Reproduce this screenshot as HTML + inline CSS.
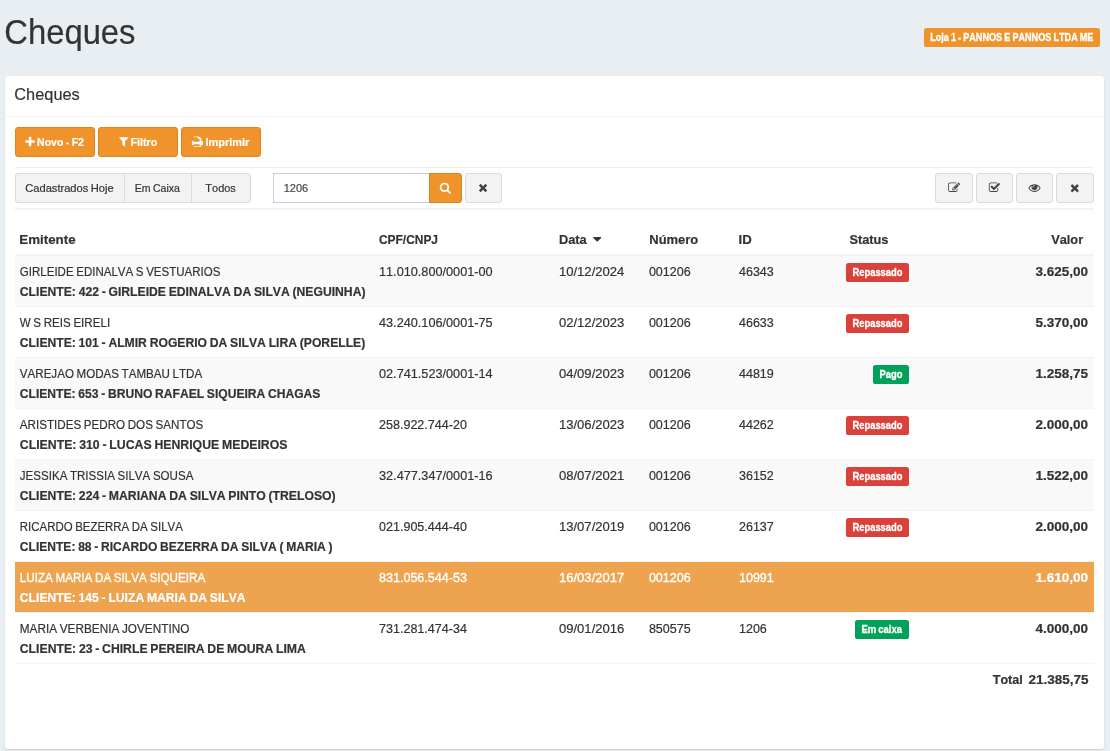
<!DOCTYPE html>
<html lang="pt-br"><head><meta charset="utf-8"><title>Cheques</title>
<style>
html,body{margin:0;padding:0}
body{width:1110px;height:751px;overflow:hidden;background:#e9eef3;position:relative;font-family:"Liberation Sans",sans-serif;color:#333}
.a{position:absolute}
.t{position:absolute;white-space:nowrap;line-height:20px;height:20px;transform-origin:0 0;word-spacing:-0.052em;font-kerning:none}
.ic{position:absolute;overflow:visible}
.r{-webkit-text-stroke:0.2px currentColor}
.s{-webkit-text-stroke:0.3px currentColor}
.b{-webkit-text-stroke:0.2px currentColor}
.w{-webkit-text-stroke:0.35px currentColor}
.card{left:5px;top:76px;width:1099px;height:673px;background:#fff;border-radius:3px;box-shadow:0 0 1px rgba(0,0,0,.09),0 1px 2px rgba(0,0,0,.13)}
.hl{height:1px;background:#f4f4f4}
.hr{left:15px;width:1079px;height:1px;background:#eee}
.bo{background:#f0932a;border:1px solid #dc851f;border-radius:3px;box-sizing:border-box}
.bd{background:#f3f3f3;border:1px solid #dadada;border-radius:3px;box-sizing:border-box}
.lb{border-radius:2.6px}
</style></head><body>
<div id="root" style="position:absolute;left:0;top:0;width:1110px;height:751px;will-change:transform">

<div class="a lb" style="left:924px;top:28px;width:176px;height:19px;background:#f0932a"></div>
<div class="a card"></div>
<div class="a hl" style="left:5px;top:116px;width:1099px"></div>
<div class="a bo" style="left:15px;top:127px;width:80px;height:30px"></div>
<div class="a bo" style="left:98px;top:127px;width:80px;height:30px"></div>
<div class="a bo" style="left:181px;top:127px;width:80px;height:30px"></div>
<div class="a hr" style="top:167px"></div>
<div class="a hr" style="top:208px;height:2px;background:linear-gradient(#f3f3f3,#f1f1f1)"></div>
<div class="a bd" style="left:15px;top:173px;width:236px;height:30px"></div>
<div class="a" style="left:124px;top:174px;width:1px;height:28px;background:#ddd"></div>
<div class="a" style="left:191px;top:174px;width:1px;height:28px;background:#ddd"></div>
<div class="a" style="left:273px;top:173px;width:157px;height:30px;box-sizing:border-box;border:1px solid #c6cfdf;background:#fff"></div>
<div class="a bo" style="left:429px;top:173px;width:33px;height:30px;border-radius:0 3px 3px 0"></div>
<div class="a bd" style="left:465px;top:173px;width:37px;height:30px"></div>
<div class="a bd" style="left:935.0px;top:173px;width:38.0px;height:30px"></div>
<div class="a bd" style="left:976.0px;top:173px;width:37.0px;height:30px"></div>
<div class="a bd" style="left:1016.0px;top:173px;width:37.0px;height:30px"></div>
<div class="a bd" style="left:1056.0px;top:173px;width:38.0px;height:30px"></div>
<div class="a" style="left:15px;top:254px;width:1079px;height:2px;background:#f4f4f4"></div>
<div class="a" style="left:15px;top:256px;width:1079px;height:50px;background:#f9f9f9"></div>
<div class="a" style="left:15px;top:306px;width:1079px;height:1px;background:#f4f4f4"></div>
<div class="a" style="left:15px;top:307px;width:1079px;height:50px;background:#fff"></div>
<div class="a" style="left:15px;top:357px;width:1079px;height:1px;background:#f4f4f4"></div>
<div class="a" style="left:15px;top:358px;width:1079px;height:50px;background:#f9f9f9"></div>
<div class="a" style="left:15px;top:408px;width:1079px;height:1px;background:#f4f4f4"></div>
<div class="a" style="left:15px;top:409px;width:1079px;height:50px;background:#fff"></div>
<div class="a" style="left:15px;top:459px;width:1079px;height:1px;background:#f4f4f4"></div>
<div class="a" style="left:15px;top:460px;width:1079px;height:50px;background:#f9f9f9"></div>
<div class="a" style="left:15px;top:510px;width:1079px;height:1px;background:#f4f4f4"></div>
<div class="a" style="left:15px;top:511px;width:1079px;height:50px;background:#fff"></div>
<div class="a" style="left:15px;top:561px;width:1079px;height:1px;background:#f4f4f4"></div>
<div class="a" style="left:15px;top:562px;width:1079px;height:50px;background:#eea34e"></div>
<div class="a" style="left:15px;top:612px;width:1079px;height:1px;background:#f4f4f4"></div>
<div class="a" style="left:15px;top:613px;width:1079px;height:50px;background:#fff"></div>
<div class="a" style="left:15px;top:663px;width:1079px;height:1px;background:#f4f4f4"></div>
<div class="a lb" style="left:845.9px;top:263px;width:63.2px;height:19px;background:#d9423a"></div>
<div class="a lb" style="left:845.9px;top:314px;width:63.2px;height:19px;background:#d9423a"></div>
<div class="a lb" style="left:873.0px;top:365px;width:36.1px;height:19px;background:#00a15a"></div>
<div class="a lb" style="left:845.9px;top:416px;width:63.2px;height:19px;background:#d9423a"></div>
<div class="a lb" style="left:845.9px;top:467px;width:63.2px;height:19px;background:#d9423a"></div>
<div class="a lb" style="left:845.9px;top:518px;width:63.2px;height:19px;background:#d9423a"></div>
<div class="a lb" style="left:855.1px;top:620px;width:54.0px;height:19px;background:#00a15a"></div>
<svg class="ic" style="left:24px;top:135px" width="13" height="13" viewBox="0 0 13 13"><path fill="#fff" transform="translate(0.050 0.929) scale(0.006696)" d="M1600 736v192q0 40-28 68t-68 28h-416v416q0 40-28 68t-68 28h-192q-40 0-68-28t-28-68v-416h-416q-40 0-68-28t-28-68v-192q0-40 28-68t68-28h416v-416q0-40 28-68t68-28h192q40 0 68 28t28 68v416h416q40 0 68 28t28 68z"/></svg>
<svg class="ic" style="left:117px;top:136px" width="13" height="13" viewBox="0 0 13 13"><path fill="#fff" transform="translate(0.700 -0.579) scale(0.006696)" d="M1595 295q17 41-14 70l-493 493v742q0 42-39 59-13 5-25 5-27 0-45-19l-256-256q-19-19-19-45v-486l-493-493q-31-29-14-70 17-39 59-39h1280q42 0 59 39z"/></svg>
<svg class="ic" style="left:190px;top:135px" width="15" height="14" viewBox="0 0 15 14"><path fill="#fff" transform="translate(0.593 0.650) scale(0.006696)" d="M448 1536h896v-256h-896v256zM448 896h896v-384h-160q-40 0-68-28t-28-68v-160h-640v640zM1728 960q0-26-19-45t-45-19-45 19-19 45 19 45 45 19 45-19 19-45zM1856 960v416q0 13-9.500 22.500t-22.500 9.500h-224v160q0 40-28 68t-68 28h-960q-40 0-68-28t-28-68v-160h-224q-13 0-22.500-9.500t-9.500-22.500v-416q0-79 56.500-135.500t135.500-56.500h64v-544q0-40 28-68t68-28h672q40 0 88 20t76 48l152 152q28 28 48 76t20 88v256h64q79 0 135.500 56.500t56.500 135.500z"/></svg>
<svg class="ic" style="left:438px;top:181px" width="15" height="15" viewBox="0 0 15 15"><path fill="#fff" transform="translate(1.350 0.771) scale(0.006696)" d="M1216 832q0-185-131.500-316.500t-316.500-131.500-316.500 131.500-131.500 316.500 131.500 316.500 316.500 131.500 316.500-131.500 131.500-316.500zM1728 1664q0 52-38 90t-90 38q-54 0-90-38l-343-342q-179 124-399 124-143 0-273.500-55.500t-225-150-150-225-55.500-273.500 55.500-273.500 150-225 225-150 273.500-55.500 273.500 55.500 225 150 150 225 55.500 273.500q0 220-124 399l343 343q37 37 37 90z"/></svg>
<svg class="ic" style="left:478px;top:183px" width="11" height="11" viewBox="0 0 11 11"><path fill="#444" transform="translate(-0.950 -1.379) scale(0.006696)" d="M1490 1322q0 40-28 68l-136 136q-28 28-68 28t-68-28l-294-294-294 294q-28 28-68 28t-68-28l-136-136q-28-28-28-68t28-68l294-294-294-294q-28-28-28-68t28-68l136-136q28-28 68-28t68 28l294 294 294-294q28-28 68-28t68 28l136 136q28 28 28 68t-28 68l-294 294 294 294q28 28 28 68z"/></svg>
<svg class="ic" style="left:947px;top:181px" width="15" height="13" viewBox="0 0 15 13"><path fill="#444" transform="translate(1.077 0.649) scale(0.006696)" d="M888 1184l116-116-152-152-116 116v56h96v96h56zM1328 464q-16-16-33 1l-350 350q-17 17-1 33t33-1l350-350q17-17 1-33zM1408 1058v190q0 119-84.500 203.500t-203.500 84.500h-832q-119 0-203.500-84.500t-84.500-203.500v-832q0-119 84.500-203.500t203.500-84.500h832q63 0 117 25 15 7 18 23 3 17-9 29l-49 49q-14 14-32 8-23-6-45-6h-832q-66 0-113 47t-47 113v832q0 66 47 113t113 47h832q66 0 113-47t47-113v-126q0-13 9-22l64-64q15-15 35-7t20 29zM1312 320l288 288-672 672h-288v-288zM1756 452l-92 92-288-288 92-92q28-28 68-28t68 28l152 152q28 28 28 68t-28 68z"/></svg>
<svg class="ic" style="left:987px;top:181px" width="15" height="13" viewBox="0 0 15 13"><path fill="#444" transform="translate(1.403 0.649) scale(0.006696)" d="M1472 930v318q0 119-84.500 203.500t-203.500 84.500h-832q-119 0-203.500-84.500t-84.500-203.500v-832q0-119 84.500-203.500t203.500-84.500h832q63 0 117 25 15 7 18 23 3 17-9 29l-49 49q-10 10-23 10-3 0-9-2-23-6-45-6h-832q-66 0-113 47t-47 113v832q0 66 47 113t113 47h832q66 0 113-47t47-113v-254q0-13 9-22l64-64q10-10 23-10 6 0 12 3 20 8 20 29zM1703 441l-814 814q-24 24-57 24t-57-24l-430-430q-24-24-24-57t24-57l110-110q24-24 57-24t57 24l263 263 647-647q24-24 57-24t57 24l110 110q24 24 24 57t-24 57z"/></svg>
<svg class="ic" style="left:1027px;top:183px" width="15" height="11" viewBox="0 0 15 11"><path fill="#444" transform="translate(1.500 -1.379) scale(0.006696)" d="M1664 960q-152-236-381-353 61 104 61 225 0 185-131.500 316.500t-316.500 131.500-316.500-131.500-131.500-316.500q0-121 61-225-229 117-381 353 133 205 333.500 326.500t434.500 121.500 434.500-121.500 333.500-326.500zM944 576q0-20-14-34t-34-14q-125 0-214.500 89.500t-89.500 214.500q0 20 14 34t34 14 34-14 14-34q0-86 61-147t147-61q20 0 34-14t14-34zM1792 960q0 34-20 69-140 230-376.500 368.500t-499.500 138.500-499.500-139-376.500-368q-20-35-20-69t20-69q140-229 376.500-368t499.500-139 499.500 139 376.500 368q20 35 20 69z"/></svg>
<svg class="ic" style="left:1069px;top:183px" width="11" height="11" viewBox="0 0 11 11"><path fill="#444" transform="translate(-0.250 -1.129) scale(0.006696)" d="M1490 1322q0 40-28 68l-136 136q-28 28-68 28t-68-28l-294-294-294 294q-28 28-68 28t-68-28l-136-136q-28-28-28-68t28-68l294-294-294-294q-28-28-28-68t28-68l136-136q28-28 68-28t68 28l294 294 294-294q28-28 68-28t68 28l136 136q28 28 28 68t-28 68l-294 294 294 294q28 28 28 68z"/></svg>
<svg class="ic" style="left:592px;top:236px" width="11" height="8" viewBox="0 0 11 8"><path fill="#333" transform="translate(-1.800 -3.900) scale(0.007812)" d="M1408 704q0 26-19 45l-448 448q-19 19-45 19t-45-19l-448-448q-19-19-19-45t19-45 45-19h896q26 0 45 19t19 45z"/></svg>
<div class="t r" id="t0" style="left:4px;top:22px;font-size:34.5px;font-weight:400;color:#333;transform:translateX(0.28px) scaleX(0.9500)">Cheques</div>
<div class="t s" id="t1" style="left:930px;top:28px;font-size:10.1px;font-weight:700;color:#fff;transform:translateX(0.20px) scaleX(0.9027)">Loja 1 - PANNOS E PANNOS LTDA ME</div>
<div class="t r" id="t2" style="left:14px;top:84px;font-size:17.3px;font-weight:400;color:#333;transform:translateX(0.29px) scaleX(0.9465)">Cheques</div>
<div class="t b" id="t3" style="left:37px;top:132px;font-size:11.5px;font-weight:700;color:#fff;transform:translateX(0.05px) scaleX(0.9157)">Novo - F2</div>
<div class="t b" id="t4" style="left:130px;top:132px;font-size:11.5px;font-weight:700;color:#fff;transform:translateX(0.50px) scaleX(0.9277)">Filtro</div>
<div class="t b" id="t5" style="left:205px;top:132px;font-size:11.5px;font-weight:700;color:#fff;transform:translateX(0.40px) scaleX(0.9534)">Imprimir</div>
<div class="t r" id="t6" style="left:25px;top:178px;font-size:11.5px;font-weight:400;color:#333;transform:translateX(0.23px) scaleX(0.9670)">Cadastrados Hoje</div>
<div class="t r" id="t7" style="left:134px;top:178px;font-size:11.5px;font-weight:400;color:#333;transform:translateX(0.75px) scaleX(0.9167)">Em Caixa</div>
<div class="t r" id="t8" style="left:205px;top:178px;font-size:11.5px;font-weight:400;color:#333;transform:translateX(0.35px) scaleX(0.9521)">Todos</div>
<div class="t r" id="t9" style="left:283px;top:178px;font-size:11.5px;font-weight:400;color:#484848;transform:translateX(0.75px) scaleX(0.9571)">1206</div>
<div class="t b" id="t10" style="left:19px;top:230px;font-size:13.4px;font-weight:700;color:#333;transform:translateX(0.30px) scaleX(0.9955)">Emitente</div>
<div class="t b" id="t11" style="left:379px;top:230px;font-size:13.4px;font-weight:700;color:#333;transform:translateX(0.00px) scaleX(0.8908)">CPF/CNPJ</div>
<div class="t b" id="t12" style="left:558px;top:230px;font-size:13.4px;font-weight:700;color:#333;transform:translateX(0.95px) scaleX(0.9572)">Data</div>
<div class="t b" id="t13" style="left:649px;top:230px;font-size:13.4px;font-weight:700;color:#333;transform:translateX(0.25px) scaleX(0.9695)">Número</div>
<div class="t b" id="t14" style="left:738px;top:230px;font-size:13.4px;font-weight:700;color:#333;transform:translateX(0.56px) scaleX(0.9850)">ID</div>
<div class="t b" id="t15" style="left:849px;top:230px;font-size:13.4px;font-weight:700;color:#333;transform:translateX(0.45px) scaleX(0.9536)">Status</div>
<div class="t b" id="t16" style="left:1051px;top:230px;font-size:13.4px;font-weight:700;color:#333;transform:translateX(0.15px) scaleX(0.9546)">Valor</div>
<div class="t r" id="t17" style="left:19px;top:262px;font-size:13.4px;font-weight:400;color:#333;transform:translateX(0.80px) scaleX(0.8610)">GIRLEIDE EDINALVA S VESTUARIOS</div>
<div class="t b" id="t18" style="left:19px;top:282px;font-size:13.4px;font-weight:700;color:#333;transform:translateX(0.80px) scaleX(0.9085)">CLIENTE: 422 - GIRLEIDE EDINALVA DA SILVA (NEGUINHA)</div>
<div class="t r" id="t19" style="left:379px;top:262px;font-size:13.4px;font-weight:400;color:#333;transform:translateX(0.00px) scaleX(0.9478)">11.010.800/0001-00</div>
<div class="t r" id="t20" style="left:558px;top:262px;font-size:13.4px;font-weight:400;color:#333;transform:translateX(0.90px) scaleX(0.9766)">10/12/2024</div>
<div class="t r" id="t21" style="left:648px;top:262px;font-size:13.4px;font-weight:400;color:#333;transform:translateX(0.90px) scaleX(0.9342)">001206</div>
<div class="t r" id="t22" style="left:739px;top:262px;font-size:13.4px;font-weight:400;color:#333;transform:translateX(0.00px) scaleX(0.9340)">46343</div>
<div class="t s" id="t23" style="left:852px;top:263px;font-size:10.1px;font-weight:700;color:#fff;transform:translateX(0.50px) scaleX(0.9275)">Repassado</div>
<div class="t b" id="t24" style="right:21.80px;top:262.00px;font-size:13.4px;font-weight:700;color:#333;transform-origin:100% 0;transform:scaleX(1.0110)">3.625,00</div>
<div class="t r" id="t25" style="left:19px;top:313px;font-size:13.4px;font-weight:400;color:#333;transform:translateX(0.80px) scaleX(0.8656)">W S REIS EIRELI</div>
<div class="t b" id="t26" style="left:19px;top:333px;font-size:13.4px;font-weight:700;color:#333;transform:translateX(0.80px) scaleX(0.9078)">CLIENTE: 101 - ALMIR ROGERIO DA SILVA LIRA (PORELLE)</div>
<div class="t r" id="t27" style="left:379px;top:313px;font-size:13.4px;font-weight:400;color:#333;transform:translateX(0.00px) scaleX(0.9478)">43.240.106/0001-75</div>
<div class="t r" id="t28" style="left:558px;top:313px;font-size:13.4px;font-weight:400;color:#333;transform:translateX(0.90px) scaleX(0.9766)">02/12/2023</div>
<div class="t r" id="t29" style="left:648px;top:313px;font-size:13.4px;font-weight:400;color:#333;transform:translateX(0.90px) scaleX(0.9342)">001206</div>
<div class="t r" id="t30" style="left:739px;top:313px;font-size:13.4px;font-weight:400;color:#333;transform:translateX(0.00px) scaleX(0.9340)">46633</div>
<div class="t s" id="t31" style="left:852px;top:314px;font-size:10.1px;font-weight:700;color:#fff;transform:translateX(0.50px) scaleX(0.9275)">Repassado</div>
<div class="t b" id="t32" style="right:21.80px;top:313.00px;font-size:13.4px;font-weight:700;color:#333;transform-origin:100% 0;transform:scaleX(1.0110)">5.370,00</div>
<div class="t r" id="t33" style="left:19px;top:364px;font-size:13.4px;font-weight:400;color:#333;transform:translateX(0.80px) scaleX(0.8654)">VAREJAO MODAS TAMBAU LTDA</div>
<div class="t b" id="t34" style="left:19px;top:384px;font-size:13.4px;font-weight:700;color:#333;transform:translateX(0.80px) scaleX(0.9032)">CLIENTE: 653 - BRUNO RAFAEL SIQUEIRA CHAGAS</div>
<div class="t r" id="t35" style="left:379px;top:364px;font-size:13.4px;font-weight:400;color:#333;transform:translateX(0.00px) scaleX(0.9478)">02.741.523/0001-14</div>
<div class="t r" id="t36" style="left:558px;top:364px;font-size:13.4px;font-weight:400;color:#333;transform:translateX(0.90px) scaleX(0.9766)">04/09/2023</div>
<div class="t r" id="t37" style="left:648px;top:364px;font-size:13.4px;font-weight:400;color:#333;transform:translateX(0.90px) scaleX(0.9342)">001206</div>
<div class="t r" id="t38" style="left:739px;top:364px;font-size:13.4px;font-weight:400;color:#333;transform:translateX(0.00px) scaleX(0.9340)">44819</div>
<div class="t s" id="t39" style="left:879px;top:365px;font-size:10.1px;font-weight:700;color:#fff;transform:translateX(0.50px) scaleX(0.9305)">Pago</div>
<div class="t b" id="t40" style="right:21.80px;top:364.00px;font-size:13.4px;font-weight:700;color:#333;transform-origin:100% 0;transform:scaleX(1.0110)">1.258,75</div>
<div class="t r" id="t41" style="left:19px;top:415px;font-size:13.4px;font-weight:400;color:#333;transform:translateX(0.80px) scaleX(0.8677)">ARISTIDES PEDRO DOS SANTOS</div>
<div class="t b" id="t42" style="left:19px;top:435px;font-size:13.4px;font-weight:700;color:#333;transform:translateX(0.80px) scaleX(0.9170)">CLIENTE: 310 - LUCAS HENRIQUE MEDEIROS</div>
<div class="t r" id="t43" style="left:379px;top:415px;font-size:13.4px;font-weight:400;color:#333;transform:translateX(0.00px) scaleX(0.9364)">258.922.744-20</div>
<div class="t r" id="t44" style="left:558px;top:415px;font-size:13.4px;font-weight:400;color:#333;transform:translateX(0.90px) scaleX(0.9766)">13/06/2023</div>
<div class="t r" id="t45" style="left:648px;top:415px;font-size:13.4px;font-weight:400;color:#333;transform:translateX(0.90px) scaleX(0.9342)">001206</div>
<div class="t r" id="t46" style="left:739px;top:415px;font-size:13.4px;font-weight:400;color:#333;transform:translateX(0.00px) scaleX(0.9340)">44262</div>
<div class="t s" id="t47" style="left:852px;top:416px;font-size:10.1px;font-weight:700;color:#fff;transform:translateX(0.50px) scaleX(0.9275)">Repassado</div>
<div class="t b" id="t48" style="right:21.80px;top:415.00px;font-size:13.4px;font-weight:700;color:#333;transform-origin:100% 0;transform:scaleX(1.0110)">2.000,00</div>
<div class="t r" id="t49" style="left:19px;top:466px;font-size:13.4px;font-weight:400;color:#333;transform:translateX(0.80px) scaleX(0.8632)">JESSIKA TRISSIA SILVA SOUSA</div>
<div class="t b" id="t50" style="left:19px;top:486px;font-size:13.4px;font-weight:700;color:#333;transform:translateX(0.80px) scaleX(0.9120)">CLIENTE: 224 - MARIANA DA SILVA PINTO (TRELOSO)</div>
<div class="t r" id="t51" style="left:379px;top:466px;font-size:13.4px;font-weight:400;color:#333;transform:translateX(0.00px) scaleX(0.9478)">32.477.347/0001-16</div>
<div class="t r" id="t52" style="left:558px;top:466px;font-size:13.4px;font-weight:400;color:#333;transform:translateX(0.90px) scaleX(0.9766)">08/07/2021</div>
<div class="t r" id="t53" style="left:648px;top:466px;font-size:13.4px;font-weight:400;color:#333;transform:translateX(0.90px) scaleX(0.9342)">001206</div>
<div class="t r" id="t54" style="left:739px;top:466px;font-size:13.4px;font-weight:400;color:#333;transform:translateX(0.00px) scaleX(0.9340)">36152</div>
<div class="t s" id="t55" style="left:852px;top:467px;font-size:10.1px;font-weight:700;color:#fff;transform:translateX(0.50px) scaleX(0.9275)">Repassado</div>
<div class="t b" id="t56" style="right:21.80px;top:466.00px;font-size:13.4px;font-weight:700;color:#333;transform-origin:100% 0;transform:scaleX(1.0110)">1.522,00</div>
<div class="t r" id="t57" style="left:19px;top:517px;font-size:13.4px;font-weight:400;color:#333;transform:translateX(0.80px) scaleX(0.8549)">RICARDO BEZERRA DA SILVA</div>
<div class="t b" id="t58" style="left:19px;top:537px;font-size:13.4px;font-weight:700;color:#333;transform:translateX(0.80px) scaleX(0.9008)">CLIENTE: 88 - RICARDO BEZERRA DA SILVA ( MARIA )</div>
<div class="t r" id="t59" style="left:379px;top:517px;font-size:13.4px;font-weight:400;color:#333;transform:translateX(0.00px) scaleX(0.9364)">021.905.444-40</div>
<div class="t r" id="t60" style="left:558px;top:517px;font-size:13.4px;font-weight:400;color:#333;transform:translateX(0.90px) scaleX(0.9766)">13/07/2019</div>
<div class="t r" id="t61" style="left:648px;top:517px;font-size:13.4px;font-weight:400;color:#333;transform:translateX(0.90px) scaleX(0.9342)">001206</div>
<div class="t r" id="t62" style="left:739px;top:517px;font-size:13.4px;font-weight:400;color:#333;transform:translateX(0.00px) scaleX(0.9340)">26137</div>
<div class="t s" id="t63" style="left:852px;top:518px;font-size:10.1px;font-weight:700;color:#fff;transform:translateX(0.50px) scaleX(0.9275)">Repassado</div>
<div class="t b" id="t64" style="right:21.80px;top:517.00px;font-size:13.4px;font-weight:700;color:#333;transform-origin:100% 0;transform:scaleX(1.0110)">2.000,00</div>
<div class="t w" id="t65" style="left:19px;top:568px;font-size:13.4px;font-weight:400;color:#fff;transform:translateX(0.80px) scaleX(0.8704)">LUIZA MARIA DA SILVA SIQUEIRA</div>
<div class="t b" id="t66" style="left:19px;top:588px;font-size:13.4px;font-weight:700;color:#fff;transform:translateX(0.80px) scaleX(0.9076)">CLIENTE: 145 - LUIZA MARIA DA SILVA</div>
<div class="t w" id="t67" style="left:379px;top:568px;font-size:13.4px;font-weight:400;color:#fff;transform:translateX(0.00px) scaleX(0.9364)">831.056.544-53</div>
<div class="t w" id="t68" style="left:558px;top:568px;font-size:13.4px;font-weight:400;color:#fff;transform:translateX(0.90px) scaleX(0.9766)">16/03/2017</div>
<div class="t w" id="t69" style="left:648px;top:568px;font-size:13.4px;font-weight:400;color:#fff;transform:translateX(0.90px) scaleX(0.9342)">001206</div>
<div class="t w" id="t70" style="left:739px;top:568px;font-size:13.4px;font-weight:400;color:#fff;transform:translateX(0.00px) scaleX(0.9340)">10991</div>
<div class="t b" id="t71" style="right:21.80px;top:568.00px;font-size:13.4px;font-weight:700;color:#fff;transform-origin:100% 0;transform:scaleX(1.0110)">1.610,00</div>
<div class="t r" id="t72" style="left:19px;top:619px;font-size:13.4px;font-weight:400;color:#333;transform:translateX(0.80px) scaleX(0.8794)">MARIA VERBENIA JOVENTINO</div>
<div class="t b" id="t73" style="left:19px;top:639px;font-size:13.4px;font-weight:700;color:#333;transform:translateX(0.80px) scaleX(0.9123)">CLIENTE: 23 - CHIRLE PEREIRA DE MOURA LIMA</div>
<div class="t r" id="t74" style="left:379px;top:619px;font-size:13.4px;font-weight:400;color:#333;transform:translateX(0.00px) scaleX(0.9364)">731.281.474-34</div>
<div class="t r" id="t75" style="left:558px;top:619px;font-size:13.4px;font-weight:400;color:#333;transform:translateX(0.90px) scaleX(0.9766)">09/01/2016</div>
<div class="t r" id="t76" style="left:648px;top:619px;font-size:13.4px;font-weight:400;color:#333;transform:translateX(0.90px) scaleX(0.9342)">850575</div>
<div class="t r" id="t77" style="left:739px;top:619px;font-size:13.4px;font-weight:400;color:#333;transform:translateX(0.00px) scaleX(0.9341)">1206</div>
<div class="t s" id="t78" style="left:861px;top:620px;font-size:10.1px;font-weight:700;color:#fff;transform:translateX(0.50px) scaleX(0.9351)">Em caixa</div>
<div class="t b" id="t79" style="right:21.80px;top:619.00px;font-size:13.4px;font-weight:700;color:#333;transform-origin:100% 0;transform:scaleX(1.0110)">4.000,00</div>
<div class="t b" id="t80" style="left:992px;top:670px;font-size:13.4px;font-weight:700;color:#333;transform:translateX(0.70px) scaleX(0.9401)">Total</div>
<div class="t b" id="t81" style="right:21.80px;top:670.00px;font-size:13.4px;font-weight:700;color:#333;transform-origin:100% 0;transform:scaleX(1.0088)">21.385,75</div>
</div>
</body></html>
